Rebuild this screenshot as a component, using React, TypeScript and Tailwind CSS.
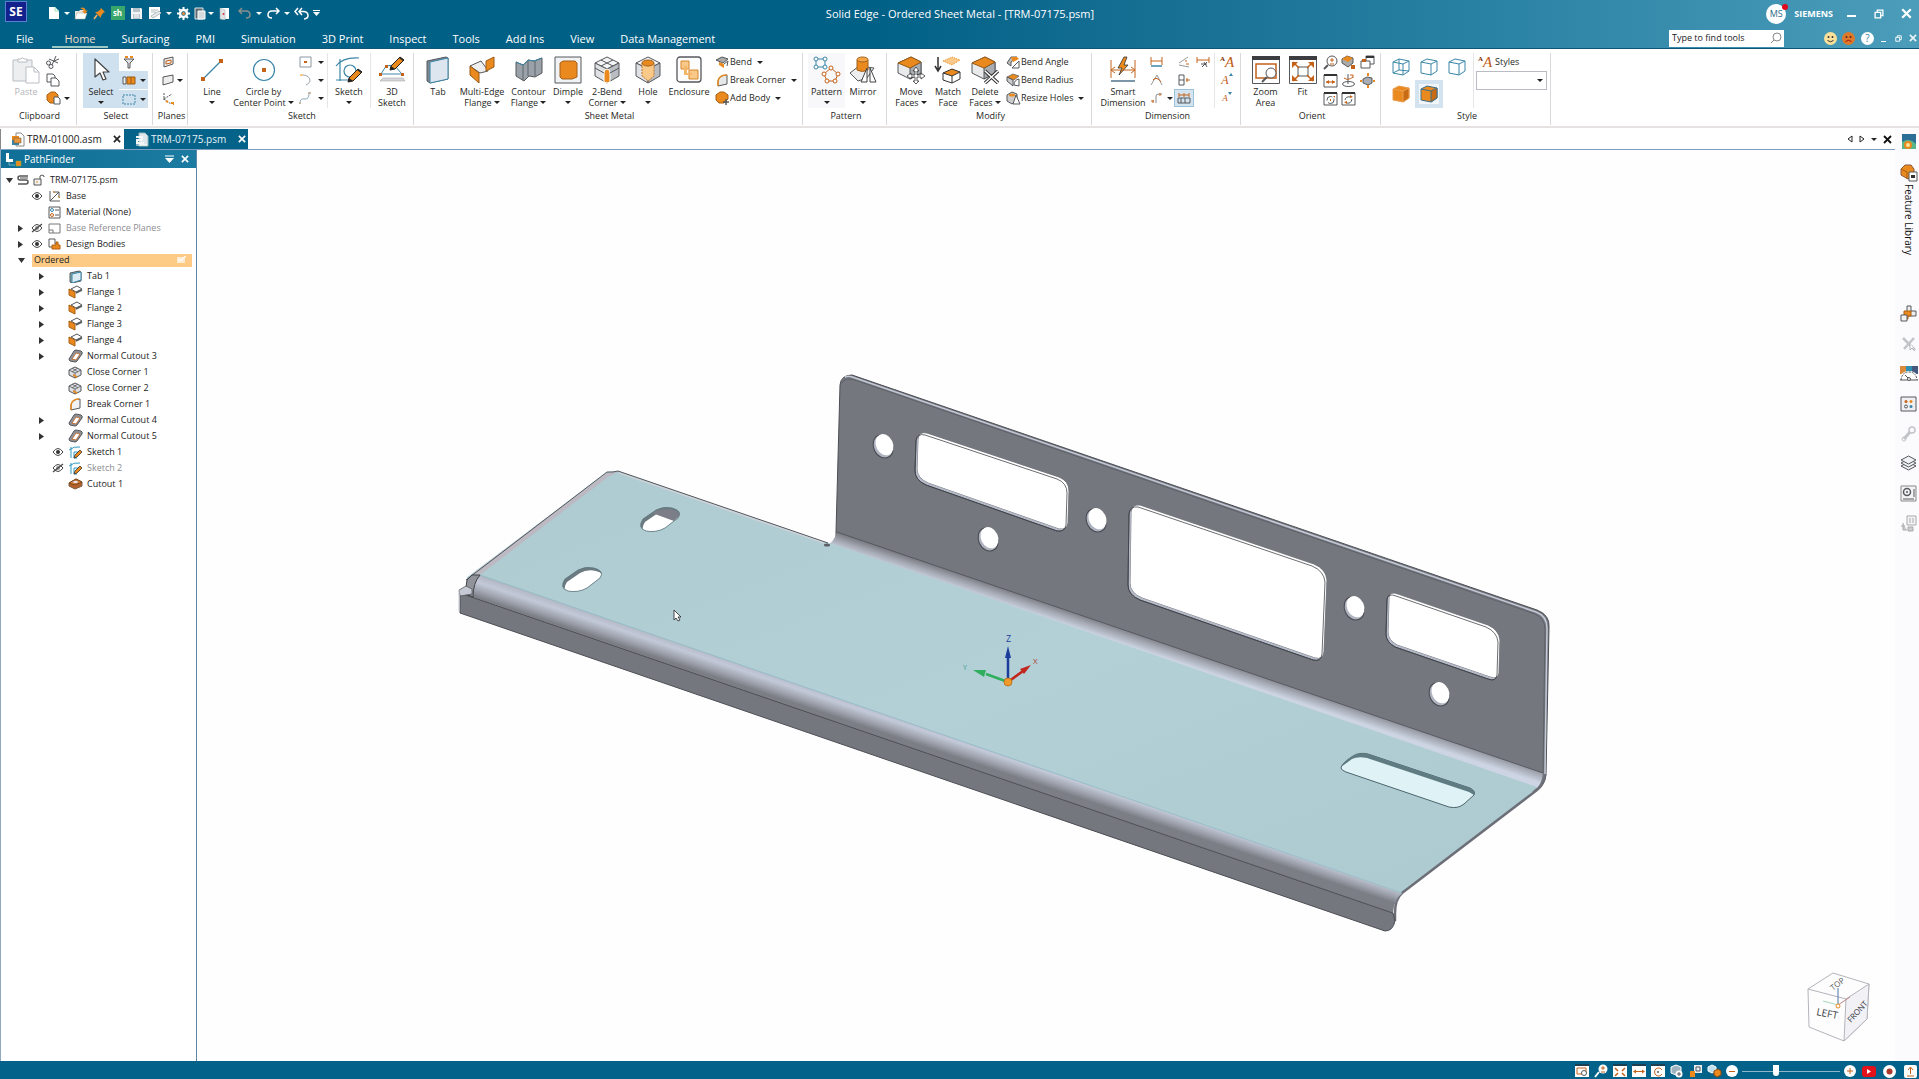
import React from "react";

type Kids = { children?: React.ReactNode };

const O = "#ea8a1e";
const OL = "#f9c98a";
const RU = "#c4621a";
const G = "#55585c";
const LG = "#d5d8dc";
const B = "#3a86a8";

function Ic({ w = 16, h = 16, vb, children }: { w?: number; h?: number; vb?: string } & Kids) {
  return (
    <svg aria-hidden="true" width={w} height={h} viewBox={vb ?? `0 0 ${w} ${h}`} fill="none" className="block shrink-0">
      {children}
    </svg>
  );
}

function Caret({ light }: { light?: boolean }) {
  return (
    <svg aria-hidden="true" width="6" height="3" viewBox="0 0 6 3" className="inline-block shrink-0">
      <path d="M0 0h6L3 3z" fill={light ? "#fff" : "#222"} />
    </svg>
  );
}

function Group({ label, className, children }: { label: string; className: string } & Kids) {
  return (
    <section aria-label={label} className={`flex shrink-0 flex-col pt-1 ${className}`}>
      <div className="flex h-[55px]">{children}</div>
      <h2 className="pl-[3px] text-center leading-[16px]">{label}</h2>
    </section>
  );
}

function Rule() {
  return <div className="my-1 h-[72px] w-px shrink-0 bg-[#d9d9dc]" />;
}

function Sep() {
  return <div className="h-full w-px shrink-0 bg-[#e6e6e8]" />;
}

function Big({ icon, lines, caret, w, dim, className = "" }: { icon: React.ReactNode; lines: string[]; caret?: boolean; w: string; dim?: boolean; className?: string }) {
  return (
    <button className={`flex h-full shrink-0 flex-col items-center pt-[2px] ${w} ${dim ? "text-[#b4b4b8]" : ""} ${className}`}>
      <span className="flex h-[29px] items-center justify-center">{icon}</span>
      <span className="flex flex-col items-center pt-[2px] leading-[11px]">
        {lines.map((l, i) => (
          <span key={l} className="flex items-center gap-[2px] whitespace-nowrap">
            {l}
            {caret && i === 1 && <Caret />}
          </span>
        ))}
        {caret && lines.length === 1 && (
          <span className="flex h-[10px] items-center">
            <Caret />
          </span>
        )}
      </span>
    </button>
  );
}

function Small({ icon, label, text, caret, w = "w-4", className = "" }: { icon: React.ReactNode; label: string; text?: boolean; caret?: boolean; w?: string; className?: string }) {
  return (
    <button aria-label={label} className={`flex h-[18px] items-center whitespace-nowrap ${className}`}>
      <span className={`flex shrink-0 justify-center ${w}`}>{icon}</span>
      {text && <span>{label}</span>}
      {caret && (
        <span className={`flex shrink-0 justify-center ${text ? "w-4" : "w-2"}`}>
          <Caret />
        </span>
      )}
    </button>
  );
}

/* ---------- shared drawings ---------- */

function CubeIc({ top = "#f4f5f6", left = "#dfe1e4", right = "#b9bcc1", s = 28, stroke = G, children }: { top?: string; left?: string; right?: string; s?: number; stroke?: string } & Kids) {
  return (
    <Ic w={s} h={s} vb="0 0 28 28">
      <path d="M14 1 26 7 14 13 2 7z" fill={top} stroke={stroke} strokeLinejoin="round" />
      <path d="M2 7v13l12 7V13z" fill={left} stroke={stroke} strokeLinejoin="round" />
      <path d="M26 7v13l-12 7V13z" fill={right} stroke={stroke} strokeLinejoin="round" />
      {children}
    </Ic>
  );
}

function Block({ children }: Kids) {
  return (
    <Ic w={28} h={28}>
      <path d="M1 7 14 1l10 5v11l-11 6-12-6z" fill="#e9eaec" stroke={G} strokeLinejoin="round" />
      <path d="M13 12 24 6v11l-11 6z" fill="#a9acb1" stroke={G} strokeLinejoin="round" />
      <path d="M1 7 14 1l10 5-11 6z" fill={O} stroke="#9a5a12" strokeLinejoin="round" />
      {children}
    </Ic>
  );
}

function Pencil({ x, y }: { x: number; y: number }) {
  return (
    <g transform={`translate(${x} ${y})`}>
      <path d="M1 14l1-4L11 1l4 3-9 9z" fill={O} stroke="#222" strokeLinejoin="round" />
      <path d="M1 14l1-4 4 3zM10 2l4 3 1-1-4-3z" fill="#222" />
    </g>
  );
}

function WireCube({ fill = "none", inner, stroke = B }: { fill?: string; inner?: boolean; stroke?: string }) {
  return (
    <Ic w={18} h={18}>
      <path d="M1 4 7 1l10 2v10l-6 4L1 15z" fill={fill} stroke={stroke} strokeLinejoin="round" />
      <path d="M1 4l10 2 6-3M11 6v11" stroke={stroke} />
      {inner && <path d="M7 1v11L1 15M7 12l10 1" stroke={stroke} />}
    </Ic>
  );
}

function SolidCube({ edge }: { edge: string }) {
  return (
    <Ic w={18} h={18}>
      <path d="M1 4 7 1l10 2v10l-6 4L1 15z" fill={O} stroke={edge} strokeLinejoin="round" />
      <path d="M11 6l6-3v10l-6 4z" fill="#c96a14" stroke={edge} strokeLinejoin="round" />
      <path d="M1 4l10 2" stroke={edge} />
    </Ic>
  );
}

function Win({ children }: Kids) {
  return (
    <Ic w={15} h={15}>
      <path d="M1 2h13v12H1z" fill="#fff" stroke={G} />
      <path d="M1 1h13v2H1z" fill="#333" />
      {children}
    </Ic>
  );
}

function BigWin({ children }: Kids) {
  return (
    <Ic w={28} h={28}>
      <path d="M.5.500h27v27H.5z" fill="#fff" stroke={G} />
      <path d="M0 0h28v4H0z" fill="#3b3d41" />
      {children}
    </Ic>
  );
}

function Letter({ size }: { size: "lg" | "md" | "sm" }) {
  const c = size === "lg" ? "text-[15px]" : size === "md" ? "text-[12px]" : "text-[9px]";
  return (
    <span className={`flex items-start font-['Liberation_Serif',serif] leading-[14px] text-[#c05a14] ${c}`}>
      {size === "lg" && <span className="text-[7px] font-bold leading-[8px] text-[#7a2c08]">A</span>}
      <i>A</i>
      {size !== "lg" && (
        <svg width="4" height="5" viewBox="0 0 4 5" aria-hidden="true">
          <path d={size === "md" ? "M0 3l2-3 2 3z" : "M0 1h4L2 4z"} fill={B} />
        </svg>
      )}
    </span>
  );
}

/* ---------- title bar ---------- */

function QuickAccess() {
  const items: [string, string, React.ReactNode][] = [
    ["New", "w-[18px]", <Ic w={12} h={14}><path d="M1 1h6l4 4v8H1z" fill="#fff" /><path d="M7 1v4h4" stroke="#9db" /></Ic>],
    ["New options", "w-2", <Caret light />],
    ["Open", "w-[19px]", <Ic w={14} h={14}><path d="M1 5h4l1-1h5v8H1z" fill="#e8e4dc" /><path d="M3 7h10l-2 6H1z" fill="#fff" stroke="#b9a99a" strokeWidth=".5" /><path d="M6 2q5-2 6 3l2-1-3 4-3-3 2 0Q9 3 6 2z" fill={O} /></Ic>],
    ["Pin", "w-[18px]", <Ic w={13} h={13}><path d="M8 1l4 4-2 1-2 3v2L2 5h2l3-2z" fill={O} /><path d="M4 8l-3 4" stroke="#f5b56b" strokeWidth="1.500" /></Ic>],
    ["Sheet metal", "w-[19px]", <span className="flex h-[14px] w-[14px] items-center justify-center bg-[#39a66b] text-[8px] font-bold leading-none text-white">sh</span>],
    ["Save", "w-[18px]", <Ic w={13} h={13}><path d="M1 1h10l1 1v10H1z" fill="#f2f3f4" /><path d="M3 1h7v4H3zM3 7h7v5H3z" fill="#b7c3ca" /><path d="M4 8h5M4 10h5" stroke="#fff" /></Ic>],
    ["Save as", "w-5", <Ic w={14} h={14}><path d="M1 1h11v12H1z" fill="#fff" /><path d="M3 4h7M3 6h5M3 10l8-5 2 2-8 5z" stroke="#b3bcc2" fill="#e9ecee" /></Ic>],
    ["Save options", "w-2", <Caret light />],
    ["Settings", "w-5", <Ic w={13} h={13}><circle cx="6.5" cy="6.500" r="3.500" stroke="#fff" strokeWidth="2.500" /><path d="M6.500 0v2.500M6.500 10.500V13M0 6.500h2.500M10.500 6.500H13M2 2l1.500 1.500M9.500 9.500 11 11M11 2 9.500 3.500M3.500 9.500 2 11" stroke="#fff" strokeWidth="2" /><circle cx="6.500" cy="6.500" r="1.500" fill="#e98a3c" /></Ic>],
    ["Properties", "w-[14px]", <Ic w={12} h={13}><path d="M1 1h8v11H1z" fill="#5d6a72" stroke="#dfe5e8" /><path d="M4 4h7v8H4z" fill="#d5dadd" stroke="#fff" /></Ic>],
    ["Properties options", "w-[7px]", <Caret light />],
    ["Close document", "w-5", <Ic w={11} h={13}><path d="M1 1h9v11H1z" fill="#fff" /><path d="M1 1l5 2v10l-5-1z" fill="#dfe3e6" stroke="#9aa" strokeWidth=".5" /><circle cx="4.500" cy="7" r="1" fill="#d33" /></Ic>],
    ["Undo", "w-[21px]", <Ic w={13} h={12}><path d="M4 1 1 4l3 3M1 4h7q4 0 4 4 0 3-4 3" stroke="#8a8f8c" strokeWidth="1.500" /></Ic>],
    ["Undo options", "w-2", <Caret light />],
    ["Redo", "w-5", <Ic w={13} h={12}><path d="M9 1l3 3-3 3M12 4H5Q1 4 1 8q0 3 4 3" stroke="#fff" strokeWidth="1.500" /></Ic>],
    ["Redo options", "w-[7px]", <Caret light />],
    ["Repeat", "w-[22px]", <Ic w={15} h={13}><path d="M4 1 1 4.500 4 8M8 1 5 4.500 8 8M5 4.500h4q5 0 5 4 0 3-4 3.500" stroke="#fff" strokeWidth="1.500" /></Ic>],
    ["Customize toolbar", "w-2", <Ic w={7} h={6}><path d="M0 .5h7" stroke="#fff" /><path d="M0 2h7L3.500 6z" fill="#fff" /></Ic>],
  ];
  return (
    <div className="flex h-[26px] items-center pl-[22px]">
      {items.map(([name, w, icon]) => (
        <button key={name} aria-label={name} className={`flex h-5 items-center justify-center ${w}`}>
          {icon}
        </button>
      ))}
    </div>
  );
}

function Restore({ s }: { s: number }) {
  return (
    <Ic w={s} h={s} vb="0 0 9 9">
      <path d="M3 3V1h5v5H6M1 3h5v5H1z" stroke="#fff" strokeWidth="1.200" />
    </Ic>
  );
}

function Cross({ s, c }: { s: number; c: string }) {
  return (
    <Ic w={s} h={s} vb="0 0 9 9">
      <path d="M1 1l7 7M8 1 1 8" stroke={c} strokeWidth="1.800" />
    </Ic>
  );
}

function Header() {
  const tabs = ["Home", "Surfacing", "PMI", "Simulation", "3D Print", "Inspect", "Tools", "Add Ins", "View", "Data Management"];
  return (
    <header className="relative h-[49px] border-b border-[#0d5676] bg-linear-to-r from-[#006086] from-45% via-[#2881a3] via-77% to-[#4b9dba] text-white">
      <div className="flex h-[29px] items-start">
        <div className="mt-px ml-[5px] flex h-[21px] w-[22px] items-center justify-center border border-[#5a7fd0] bg-[#12218c] text-[12px] font-bold leading-none">SE</div>
        <div className="-ml-1">
          <QuickAccess />
        </div>
        <div className="ml-auto flex h-[27px] items-center">
          <button aria-label="Account" className="relative flex h-5 w-5 items-center justify-center rounded-full bg-white text-[9px] text-[#2c6b88]">
            MS
            <span className="absolute top-0 -right-[2px] h-[6px] w-[6px] rounded-full bg-[#e00b1c]" />
          </button>
          <b className="ml-2 text-[9px]">SIEMENS</b>
          <button aria-label="Minimize" className="ml-[14px] flex h-5 w-[11px] items-center pt-1">
            <span className="h-[2px] w-[9px] bg-white" />
          </button>
          <button aria-label="Restore" className="ml-4">
            <Restore s={10} />
          </button>
          <button aria-label="Close" className="mr-[7px] ml-[17px]">
            <Cross s={11} c="#fff" />
          </button>
        </div>
      </div>
      <h1 className="pointer-events-none absolute inset-x-0 top-[6px] pl-px text-center text-[11px] leading-[16px]">Solid Edge - Ordered Sheet Metal - [TRM-07175.psm]</h1>
      <div className="flex h-[19px] items-start">
        <nav className="flex h-[19px] gap-[2px] text-[11px] leading-[20px]">
          <button className="mr-[5px] pr-3 pl-4">File</button>
          {tabs.map((t) => (
            <button key={t} className={`h-[19px] px-3 ${t === "Home" ? "border-b-2 border-[#9cc9c4] text-[#f1dcc8]" : ""}`}>
              {t}
            </button>
          ))}
        </nav>
        <div className="ml-auto flex h-[18px] items-center">
          <label className="flex h-[17px] w-[115px] items-center bg-white pr-[2px] text-[#222]">
            <input aria-label="Type to find tools" placeholder="Type to find tools" className="min-w-0 flex-1 bg-transparent pl-[3px] text-[9px] text-black outline-none placeholder:text-[#222]" />
            <Ic w={12} h={12}>
              <circle cx="7" cy="5" r="4" stroke="#888" />
              <path d="M4 8 1 11" stroke="#888" />
            </Ic>
          </label>
          <button aria-label="Like" className="ml-10">
            <Ic w={13} h={13}><circle cx="6.500" cy="6.500" r="6.500" fill="#fbe19a" /><circle cx="4.500" cy="5" r="1" fill="#333" /><circle cx="8.500" cy="5" r="1" fill="#333" /><path d="M3.500 8.500q3 2.500 6 0" stroke="#333" /></Ic>
          </button>
          <button aria-label="Dislike" className="ml-[5px]">
            <Ic w={13} h={13}><circle cx="6.500" cy="6.500" r="6.500" fill="#dd7a2a" /><circle cx="4.500" cy="5" r="1" fill="#522" /><circle cx="8.500" cy="5" r="1" fill="#522" /><path d="M3.500 9.500q3-2.500 6 0" stroke="#a11" /></Ic>
          </button>
          <button aria-label="Help" className="ml-[6px] flex h-[13px] w-[13px] items-center justify-center rounded-full bg-white text-[10px] leading-none text-[#2f86a8]">?</button>
          <button aria-label="Minimize document" className="ml-[7px] flex h-[14px] items-end pb-[3px]">
            <span className="h-px w-[5px] bg-white" />
          </button>
          <button aria-label="Restore document" className="ml-[9px]">
            <Restore s={7} />
          </button>
          <button aria-label="Close document" className="mr-[2px] ml-[7px]">
            <Cross s={8} c="#e8f4f8" />
          </button>
        </div>
      </div>
    </header>
  );
}

/* ---------- ribbon ---------- */

function Ribbon() {
  const tealStroke = { stroke: B, strokeWidth: 1.2 };
  return (
    <div className="flex h-[79px] shrink-0 overflow-hidden border-b-2 border-[#e6e2e2] bg-white text-[9px] text-[#1f1f24]">
      <Group label="Clipboard" className="w-[76px]">
        <Big w="ml-[7px] w-[38px]" dim lines={["Paste"]} icon={
          <Ic w={28} h={28}>
            <path d="M1 4h19v21H1z" fill="#eceef0" stroke="#b9bdc2" /><path d="M6 6V3h3q1-3 3 0h3v3z" fill="#fff" stroke="#b9bdc2" />
            <path d="M14 11h8l5 5v11H14z" fill="#fff" stroke="#b9bdc2" /><path d="M22 11v5h5" stroke="#b9bdc2" />
          </Ic>} />
        <div>
          <Small label="Cut" icon={<Ic w={14} h={14}><path d="M3 4l9 4M10 1 6 10" stroke={G} /><circle cx="2.500" cy="8" r="2" stroke={G} /><circle cx="5" cy="11.500" r="2" stroke={G} /><path d="M8 6l5-2" stroke={G} /></Ic>} />
          <Small label="Copy" icon={<Ic w={14} h={14}><path d="M1 1h6l2 2v6H1z" fill="#fff" stroke={G} /><path d="M5 5h5l3 3v5H5z" fill="#fff" stroke={G} /></Ic>} />
          <Small label="Paste special" caret className="gap-[2px]" icon={<Ic w={15} h={14}><path d="M1 4 5 1h4l3 3v4l-4 4H4L1 9z" fill={O} stroke="#a85e10" /><path d="M8 6h4l2 2v5H8z" fill="#fff" stroke={G} /></Ic>} />
        </div>
      </Group>
      <Rule />
      <Group label="Select" className="w-[75px]">
        <Big w="ml-[6px] w-9" className="bg-[#cfe1ee]" lines={["Select"]} caret icon={
          <Ic w={18} h={24}><path d="M3 1v18l5-4 3 7 3-1-3-7h6z" fill="#fff" stroke="#444" strokeWidth="1.200" strokeLinejoin="round" /></Ic>} />
        <div className="w-[29px]">
          <Small label="Filter" w="w-5" icon={<Ic w={12} h={14}><path d="M1 4h10L7 8v5H5V8z" fill="#e3e3e3" stroke={G} /><path d="M2 2h3M7 2h3" stroke={O} strokeWidth="2" /></Ic>} />
          <Small label="Select mode" w="w-5" caret className="w-full bg-[#cfe1ee]" icon={<Ic w={15} h={11}><path d="M1 2h3v7H1z" stroke={G} fill="#eee" /><path d="M5 2h8v7H5z" fill={O} stroke="#9a5a12" /><path d="M9 2v7" stroke="#9a5a12" /></Ic>} />
          <Small label="Select box" w="w-5" caret className="mt-px w-full bg-[#cfe1ee]" icon={<Ic w={14} h={11}><path d="M1 1h12v9H1z" stroke={B} strokeDasharray="2 1" /></Ic>} />
        </div>
      </Group>
      <Rule />
      <Group label="Planes" className="w-[34px]">
        <div className="ml-[7px]">
          <Small label="Coincident plane" icon={<Ic w={11} h={12}><path d="M1 3l9-2v7l-9 3z" fill="#eee" stroke={G} /><path d="M3 5l5-1v3L3 8z" stroke={RU} /></Ic>} />
          <Small label="Plane types" caret className="-mr-2" icon={<Ic w={12} h={12}><path d="M1 3l10-2v7L1 11z" fill="#eee" stroke={G} /></Ic>} />
          <Small label="Coordinate system" icon={<Ic w={12} h={13}><path d="M2 1v6l8-5M2 7l7 5M2 7H1" stroke={G} strokeDasharray="2 1" /><path d="M9 11h3v2M4 9l2 1" stroke={O} strokeWidth="2" /></Ic>} />
        </div>
      </Group>
      <Rule />
      <Group label="Sketch" className="w-[225px]">
        <Big w="ml-[3px] w-[42px]" lines={["Line"]} caret icon={<Ic w={24} h={24}><path d="M3 21 21 3" {...tealStroke} /><path d="M1 19h4v4H1zM19 1h4v4h-4z" fill={RU} /></Ic>} />
        <Big w="w-[61px]" lines={["Circle by", "Center Point"]} caret icon={<Ic w={24} h={24}><circle cx="12" cy="12" r="10.500" {...tealStroke} /><path d="M10 10h4v4h-4z" fill={RU} /></Ic>} />
        <div className="ml-px">
          <Small label="Rectangle" w="w-5" caret className="gap-[2px]" icon={<Ic w={13} h={12}><path d="M1 1h11v10H1z" stroke="#8a97a0" /><path d="M5 5h3v2H5z" fill={RU} /></Ic>} />
          <Small label="Arc" w="w-5" caret className="gap-[2px]" icon={<Ic w={12} h={12}><path d="M3 1q8 0 8 6-1 3-4 4" stroke="#9aa3ab" /><path d="M1 0h3v2H1z" fill={OL} /></Ic>} />
          <Small label="Curve" w="w-5" caret className="gap-[2px]" icon={<Ic w={13} h={12}><path d="M1 11q0-5 5-4 4 0 4-5" stroke="#86a9bc" /><path d="M9 0h3v2H9zM0 10h2v2H0z" fill="#c9b8a6" /></Ic>} />
        </div>
        <div className="w-[3px]" />
        <Sep />
        <Big w="w-[42px]" lines={["Sketch"]} caret icon={<Ic w={28} h={28}><path d="M5 3v22M1 10Q8 1 24 2M1 24h16" {...tealStroke} /><circle cx="15" cy="15" r="6" {...tealStroke} /><Pencil x={12} y={12} /></Ic>} />
        <Sep />
        <Big w="w-[42px]" lines={["3D", "Sketch"]} icon={<Ic w={28} h={28}><path d="M3 18 8 10l8-1 8 9z" stroke={B} /><path d="M1 17h3v3H1zM23 17h3v3h-3zM7 9h3v3H7z" fill={RU} /><path d="M5 22h20l2 3H2z" fill={LG} stroke="#999" strokeWidth=".5" /><Pencil x={11} y={0} /></Ic>} />
      </Group>
      <Rule />
      <Group label="Sheet Metal" className="w-[388px]">
        <Big w="ml-[5px] w-[38px]" lines={["Tab"]} icon={<Ic w={24} h={28}><path d="M1 5 20 1l2 1v21L4 27l-3-2z" fill="#7f8890" stroke={G} /><path d="M4 6 22 2v21L4 27z" fill="#dde6ee" stroke={B} /></Ic>} />
        <Big w="w-[50px]" lines={["Multi-Edge", "Flange"]} caret icon={<Ic w={28} h={28}><path d="M2 10 13 5l6 8 1 2-8 2z" fill="#eee" stroke={G} /><path d="M2 10l9 7v10l-9-8zM18 5l8-4v10l-8 4z" fill={O} stroke="#9a5a12" strokeLinejoin="round" /></Ic>} />
        <Big w="w-[43px]" lines={["Contour", "Flange"]} caret icon={<Ic w={28} h={26}><path d="M1 5l7 3q3-2 5-5l6 1 8-3v15l-7 4-6-1-5 5-8-5z" fill="#9aa1a8" stroke={G} strokeLinejoin="round" /><path d="M8 8v15M13 3v16M20 4v15" stroke="#5f676f" /><path d="M1 5l7 3q3-2 5-5l6 1 8-3" stroke={B} /></Ic>} />
        <Big w="w-9" lines={["Dimple"]} caret icon={<Ic w={28} h={28}><path d="M1 1h26v26H1z" fill="#f1f2f3" stroke={G} /><path d="M9 5h12l2 2v14l-5 2H8l-2-2V7z" fill={O} stroke="#a3601a" /></Ic>} />
        <Big w="w-[42px]" lines={["2-Bend", "Corner"]} caret icon={<CubeIc><path d="M8 4l12 6M20 4 8 10" stroke={G} /><path d="M11 26v-9q0-4 3-4t3 4v9l-3 1z" fill={O} stroke="#fff" /><path d="M2 12l9 5M26 12l-9 5" stroke={G} /></CubeIc>} />
        <Big w="w-10" lines={["Hole"]} caret icon={<CubeIc><path d="M8 7v13l6 5 6-5V7z" fill={OL} stroke="#c07830" strokeDasharray="2 1" /><ellipse cx="14" cy="7" rx="6" ry="3" fill={O} stroke="#a3601a" /></CubeIc>} />
        <Big w="w-[42px]" lines={["Enclosure"]} icon={<Ic w={26} h={27}><rect x="1" y="1" width="24" height="25" rx="3" fill="#fdfdfe" stroke={G} strokeWidth="1.300" /><path d="M5 5h8v8H5zM13 14h9v9h-9z" fill={OL} stroke="#d8862a" /><path d="M8 10h3v7h5v2H8z" fill="#f4b76a" /></Ic>} />
        <div className="ml-1">
          <Small label="Bend" text caret icon={<Ic w={14} h={14}><path d="M1 5l6-3 6 2-5 4z" fill="#aaa" stroke={G} /><path d="M4 7l5 2v4L4 10z" fill={O} /><path d="M9 9l4-3-1 5" stroke={G} /></Ic>} />
          <Small label="Break Corner" text caret icon={<Ic w={14} h={14}><path d="M3 13V8q1-6 9-6v9z" fill="#e6e8ea" stroke={G} /><path d="M3 13V8q1-6 9-6" stroke={O} strokeWidth="1.500" /></Ic>} />
          <Small label="Add Body" text caret icon={<Ic w={14} h={14}><path d="M1 4 5 1h4l4 3v4l-4 4H4L1 9z" fill={O} stroke="#a85e10" /><path d="M11 8v6M8 11h6" stroke={G} strokeWidth="1.500" /></Ic>} />
        </div>
      </Group>
      <Rule />
      <Group label="Pattern" className="w-[83px]">
        <Big w="ml-[5px] w-[37px]" className="bg-[#f8f8fb]" lines={["Pattern"]} caret icon={
          <Ic w={28} h={28}><path d="M3 3h9v8H3z" stroke={B} /><circle cx="3" cy="3" r="2" fill="#fff" stroke={B} /><circle cx="12" cy="3" r="2" fill="#fff" stroke={B} /><circle cx="3" cy="11" r="2" fill="#fff" stroke={B} /><circle cx="12" cy="11" r="2" fill="#fff" stroke={B} />
            <path d="M18 12l7 6-3 7h-8l-3-7z" stroke={RU} />{[[18, 12], [25, 18], [22, 25], [14, 25], [11, 18]].map(([x, y]) => <circle key={x} cx={x} cy={y} r="2" fill="#fff" stroke={RU} />)}</Ic>} />
        <Big w="w-9" lines={["Mirror"]} caret icon={<Ic w={28} h={28}><path d="M1 17l9-7 15 2-7 10-9 3z" fill="#eceef0" stroke={G} /><path d="M8 4v10q5 3 11 0V4z" fill={O} stroke="#a3601a" /><ellipse cx="13.500" cy="3.500" rx="5.500" ry="2.500" fill="#f3a548" stroke="#a3601a" /><path d="M18 12v14h-6zM21 12v14h6z" fill="#fff" stroke="#444" /></Ic>} />
      </Group>
      <Rule />
      <Group label="Modify" className="w-[204px]">
        <Big w="ml-[5px] w-[38px]" lines={["Move", "Faces"]} caret icon={<Block><path d="M19 11l3 4h-2v4h4v-2l4 3-4 3v-2h-4v4h2l-3 3-3-3h2v-4h-4v2l-4-3 4-3v2h4v-4h-2z" fill="#fff" stroke="#333" strokeWidth=".8" /></Block>} />
        <Big w="w-9" lines={["Match", "Face"]} icon={<Ic w={28} h={28}><path d="M4 1v12M1 10l3 5 3-5" stroke="#333" strokeWidth="1.500" /><path d="M9 5l9-4 8 3-8 5z" fill={OL} stroke={O} strokeDasharray="1 1" /><path d="M9 17v7l9 3 8-4v-7" stroke="#333" /><path d="M9 17l9-4 8 3-8 4zM18 20v7" fill={O} stroke="#333" /></Ic>} />
        <Big w="w-[38px]" lines={["Delete", "Faces"]} caret icon={<Block><path d="M14 15l13 12M27 15 14 27" stroke="#333" strokeWidth="3.500" /><path d="M14 15l13 12M27 15 14 27" stroke="#fff" strokeWidth="1.500" /></Block>} />
        <div className="ml-px">
          <Small label="Bend Angle" text icon={<Ic w={15} h={14}><path d="M1 8 5 2l6 0-6 5v4z" fill="#bbb" stroke={G} /><path d="M5 2h6l2 2-6 3z" fill={O} /><path d="M6 13 13 6v7z" fill="#fff" stroke={G} /></Ic>} />
          <Small label="Bend Radius" text icon={<Ic w={15} h={14}><path d="M1 4l6-3 6 2-5 4z" fill={O} stroke={G} strokeWidth=".7" /><path d="M1 4v4l6 5V7z" fill="#ccc" stroke={G} /><path d="M8 12q0-5 5-6v7z" fill="#fff" stroke={G} /></Ic>} />
          <Small label="Resize Holes" text caret icon={<Ic w={15} h={14}><path d="M1 4l5-3 5 2v6l-5 4-5-3z" fill="#ccc" stroke={G} /><ellipse cx="6" cy="4" rx="3" ry="1.500" fill={O} /><path d="M10 4l4 9H7z" fill="#fff" stroke={G} /></Ic>} />
        </div>
      </Group>
      <Rule />
      <Group label="Dimension" className="w-[148px]">
        <Big w="ml-[6px] w-[50px]" lines={["Smart", "Dimension"]} icon={<Ic w={28} h={28}><path d="M2 4v18M26 4v18M2 14h24M6 11l-4 3 4 3M22 11l4 3-4 3" stroke={RU} /><path d="M2 25h24" stroke="#7b97a8" strokeWidth="2" /><path d="M15 1 9 12h4l-3 7 9-10h-4l3-8z" fill={O} stroke="#333" strokeWidth=".8" /></Ic>} />
        <div className="-ml-px">
          <Small label="Distance between" w="w-[18px]" icon={<Ic w={13} h={12}><path d="M1 1v8M12 1v8M1 5h11" stroke={RU} /><path d="M1 10h11" stroke={B} strokeWidth="1.500" /></Ic>} />
          <Small label="Angle between" w="w-[18px]" icon={<Ic w={13} h={12}><path d="M1 11 7 1l5 10" stroke="#999" /><path d="M3 6q4-4 8 2" stroke={RU} /></Ic>} />
          <Small label="Coordinate dimension" w="w-[18px]" caret className="gap-px" icon={<Ic w={13} h={12}><path d="M6 11V4q0-2 3-2h3" stroke="#888" /><path d="M1 9h3M3 8v3M10 1v3" stroke={RU} /></Ic>} />
        </div>
        <div>
          <Small label="Symmetric diameter" w="w-5" icon={<Ic w={12} h={12}><path d="M1 7l9-6M1 9l10 2" stroke="#999" /><path d="M8 4v2M8 8h3" stroke={RU} /></Ic>} />
          <Small label="Chamfer dimension" w="w-5" icon={<Ic w={13} h={12}><path d="M1 1h5v10H1zM1 6h5" stroke={G} /><path d="M8 6h4M9 4v4" stroke={RU} /></Ic>} />
          <Small label="Dimension alignment" w="w-[18px]" className="border border-[#9cc1da] bg-[#d3e4f0]" icon={<Ic w={14} h={12}><path d="M1 6h12v5H1zM4 6v5M8 6v5" stroke={G} /><path d="M2 3h10M2 1v4M7 1v4M12 1v4" stroke={RU} /></Ic>} />
        </div>
        <div>
          <Small label="Attach dimension" w="w-[18px]" icon={<Ic w={14} h={12}><path d="M1 1v6M13 1v6M1 4h12" stroke={RU} /><path d="M5 8h6M8 6l3 5M11 6l-5 5" stroke={G} /></Ic>} />
        </div>
        <div className="w-[2px]" />
        <Sep />
        <div className="ml-[3px]">
          <Small label="Text style" w="w-[18px]" icon={<Letter size="lg" />} />
          <Small label="Increase text" w="w-[18px]" icon={<Letter size="md" />} />
          <Small label="Decrease text" w="w-[18px]" icon={<Letter size="sm" />} />
        </div>
      </Group>
      <Rule />
      <Group label="Orient" className="w-[139px]">
        <Big w="ml-[6px] w-[37px]" lines={["Zoom", "Area"]} icon={<BigWin><path d="M4 8h20v14H4z" stroke={RU} strokeWidth="1.500" /><circle cx="19" cy="17" r="5" fill="#fff" stroke={G} /><path d="M15 21l-5 5" stroke={G} strokeWidth="2" /></BigWin>} />
        <Big w="w-[37px]" lines={["Fit"]} icon={<BigWin><path d="M9 11h10v9H9z" stroke={G} /><path d="M4 6l6 6M24 6l-6 6M4 25l6-6M24 25l-6-6" stroke={RU} strokeWidth="1.500" /><path d="M3 6h6L3 12zM25 6h-6l6 6zM3 25v-6l6 6zM25 25h-6l6-6z" fill={RU} /></BigWin>} />
        <div>
          <Small label="Zoom" w="w-[18px]" icon={<Ic w={15} h={15}><circle cx="9" cy="6" r="5" stroke={G} /><path d="M5 10l-4 4" stroke={G} strokeWidth="2" /><path d="M7 5h4M9 3v4M7 9h4" stroke={RU} /></Ic>} />
          <Small label="Pan" w="w-[18px]" icon={<Win><path d="M3 9h9" stroke={RU} strokeWidth="1.200" /><path d="M3 9l3-2v4zM12 9l-3-2v4z" fill={RU} /></Win>} />
          <Small label="Rotate" w="w-[18px]" icon={<Win><circle cx="7.500" cy="9" r="3.500" stroke={G} strokeDasharray="8 2" /><path d="M7 8h1v2H7zM10 5h2v2z" fill={RU} /></Win>} />
        </div>
        <div>
          <Small label="Common views" w="w-[19px]" icon={<Ic w={15} h={15}><path d="M1 4l5-3 6 2v5l-5 4-6-4z" fill="#aaa" stroke={G} /><path d="M1 4l5-3 6 2-5 4z" fill={O} /><path d="M10 10h4v4h-4z" fill={RU} /></Ic>} />
          <Small label="Spin about" w="w-[19px]" icon={<Ic w={15} h={15}><ellipse cx="7.500" cy="11" rx="6" ry="2.500" stroke={G} /><path d="M7 1v10" stroke={G} /><path d="M3 5q4 3 9-1M9 2h3v3" stroke={RU} /></Ic>} />
          <Small label="Refresh" w="w-[19px]" icon={<Win><path d="M4 9q1-4 5-3M11 8q-1 5-5 4" stroke={G} /><path d="M9 4l3 2-3 1zM6 13l-3-2 3-1z" fill={RU} /></Win>} />
        </div>
        <div>
          <Small label="Named views" w="w-[18px]" icon={<Ic w={15} h={14}><path d="M6 1h8v8H6z" fill="#fff" stroke={G} /><path d="M6 1h8v2H6z" fill="#333" /><path d="M1 6h9v7H1z" fill="#fff" stroke={G} /><path d="M2 4h4v3H2z" fill={RU} /></Ic>} />
          <Small label="Look at face" w="w-[18px]" icon={<Ic w={15} h={15}><path d="M3 6l4-2 5 1v5l-4 2-5-2z" fill="#aaadb2" stroke={G} /><path d="M7 0h2v3H7zM7 12h2v3H7zM0 7h2v2H0zM13 7h2v2h-2z" fill={O} /></Ic>} />
        </div>
      </Group>
      <Rule />
      <Group label="Style" className="w-[169px]">
        <div className="ml-[6px] grid grid-cols-[28px_28px_28px] grid-rows-[27px_28px] place-items-center">
          <button aria-label="Wire frame"><WireCube inner /></button>
          <button aria-label="Hidden edges"><WireCube /></button>
          <button aria-label="Visible edges"><WireCube fill="#fbfdfe" /></button>
          <button aria-label="Shaded"><SolidCube edge="#e8a050" /></button>
          <button aria-label="Shaded with edges" className="flex h-7 w-7 items-center justify-center border-4 border-[#d3e4f0] bg-[#f2f6fa]"><SolidCube edge="#3d7088" /></button>
        </div>
        <div className="w-[2px]" />
        <Sep />
        <div className="ml-[2px]">
          <Small label="Styles" text w="w-[18px]" className="gap-px" icon={<Letter size="lg" />} />
          <span className="relative block">
            <select aria-label="Style name" className="block h-[19px] w-[71px] appearance-none border border-[#b9bcc4] bg-white">
              <option></option>
            </select>
            <span className="pointer-events-none absolute top-0 right-1 flex h-[19px] items-center"><Caret /></span>
          </span>
        </div>
      </Group>
      <Rule />
    </div>
  );
}

/* ---------- document tabs ---------- */

function DocTabs() {
  return (
    <div className="flex h-[22px] items-end border-b border-[#7f9fc0] bg-white text-[10px] leading-5">
      <div className="flex h-5 w-[124px] items-center border-l border-[#888] pl-[10px] text-[#222]">
        <Ic w={14} h={15}><path d="M5 1h5l3 3v10H5z" fill="#fff" stroke="#888" /><path d="M1 4h7v4H1z" fill={O} /><path d="M1 8h7v5H1z" fill={B} /><path d="M3 6h7v5H3z" fill="#e9973c" stroke="#7a5a3a" strokeWidth=".6" /></Ic>
        <button className="ml-[2px]">TRM-01000.asm</button>
        <button aria-label="Close TRM-01000.asm" className="mr-[3px] ml-auto"><Cross s={8} c="#222" /></button>
      </div>
      <div className="flex h-5 w-[124px] items-center bg-[#056389] pl-[11px] text-[#e7f2f6]">
        <Ic w={14} h={15}><path d="M4 1h6l3 3v10H4z" fill="#dfe7ec" stroke="#9bb" /><path d="M1 5h6v3H2v3h7" stroke="#f4f7f9" strokeWidth="2" /><path d="M1 13h11" stroke="#fff" /></Ic>
        <button className="ml-[2px]">TRM-07175.psm</button>
        <button aria-label="Close TRM-07175.psm" className="mr-[2px] ml-auto"><Cross s={8} c="#fff" /></button>
      </div>
      <div className="mr-[27px] ml-auto flex h-5 items-center gap-[6px]">
        <button aria-label="Previous tab"><Ic w={6} h={8}><path d="M5 1v6L1 4z" stroke="#222" /></Ic></button>
        <button aria-label="Next tab"><Ic w={6} h={8}><path d="M1 1v6l4-3z" stroke="#222" /></Ic></button>
        <button aria-label="Tab list" className="flex items-center"><Caret /></button>
        <button aria-label="Close tab"><Cross s={9} c="#111" /></button>
      </div>
    </div>
  );
}

/* ---------- tree ---------- */

function Eye({ off }: { off?: boolean }) {
  return (
    <Ic w={12} h={10}>
      <path d="M1 5q5-7 10 0-5 7-10 0z" fill="#fff" stroke="#444" />
      <circle cx="6" cy="5" r="2" fill={off ? "#999" : "#333"} />
      {off && <path d="M1 9 11 1" stroke="#444" strokeWidth="1.200" />}
    </Ic>
  );
}

const treeIcons: Record<string, React.ReactNode> = {
  base: <Ic w={13} h={13}><path d="M2 1v10h10M2 11 11 2M5 2h6v6" stroke={G} /><path d="M5 1l2 2M10 6l2 2" stroke={O} /></Ic>,
  material: <Ic w={13} h={13}><path d="M1 1h11v11H1z" fill="#fff" stroke={G} /><circle cx="4" cy="4" r="1.500" stroke={B} /><circle cx="4" cy="9" r="1.500" stroke={RU} /><path d="M7 4h4M7 9h4" stroke={G} /></Ic>,
  plane: <Ic w={13} h={11}><path d="M1 1h11v9H1zM1 7h4v3" stroke="#777" /></Ic>,
  bodies: <Ic w={13} h={12}><path d="M1 1h6v5h2v3H1z" fill="#fff" stroke={G} /><path d="M4 7h4V4h2v3h2v4H4z" fill={O} stroke="#b06010" /></Ic>,
  tab: <Ic w={13} h={13}><path d="M1 3l9-2 2 1v9l-9 2-2-1z" fill="#8aa" stroke={G} /><path d="M3 4l9-2v8l-9 3z" fill="#dcebf4" stroke={B} /></Ic>,
  flange: <Ic w={15} h={14}><path d="M3 4l6-3 5 3-6 3z" fill="#fff" stroke={G} strokeLinejoin="round" /><path d="M1 4l6 3v6L1 10z" fill={O} stroke="#a85e10" strokeLinejoin="round" /><path d="M8 8l6-3" stroke={G} strokeWidth="1.500" /></Ic>,
  cutout: <Ic w={15} h={14}><path d="M1 10 6 2q1-1 2-1l5 1q2 1 1 3L9 12q-1 1-2 1l-5-1q-1-1-1-2z" fill="#8d9197" stroke={G} /><path d="M4 10l4-6 4 1-4 6z" fill="#fff" stroke={RU} strokeWidth=".8" /></Ic>,
  close: <Ic w={14} h={13}><path d="M7 1l6 3v5l-6 3-6-3V4z" fill="#dcdee1" stroke={G} /><path d="M1 4l6 3 6-3M4 2l6 4M10 2 4 6M7 7v5" stroke={G} strokeWidth=".8" /><path d="M5 8l4 2v2L5 10z" fill={O} /></Ic>,
  break: <Ic w={13} h={13}><path d="M2 12V7q1-6 9-6v9z" fill="#f2f3f4" stroke={G} /><path d="M2 12V7q1-6 8-6" stroke={O} strokeWidth="1.500" /></Ic>,
  sketch: <Ic w={15} h={13}><path d="M3 1v11M1 4q5-4 11-3M6 6h5M6 6v6h3" stroke="#2f9ac0" /><path d="M6 12l1-3 5-5 2 2-5 5z" fill={O} stroke="#333" strokeWidth=".8" /></Ic>,
  solid: <Ic w={15} h={12}><path d="M1 5 8 1l6 3v4l-7 3-6-3z" fill="#b5622a" stroke="#7a5a44" /><path d="M1 5 8 1l6 3-7 3z" fill={O} stroke="#7a4a22" /><ellipse cx="7.500" cy="4" rx="3" ry="1.300" fill="#fff" stroke="#844" strokeWidth=".6" /></Ic>,
};

type Row = { t: string; i: string; lvl: 1 | 2; arrow?: boolean; eye?: "on" | "off"; dim?: boolean };
const topRows: Row[] = [
  { t: "Base", i: "base", lvl: 1, eye: "on" },
  { t: "Material (None)", i: "material", lvl: 1 },
  { t: "Base Reference Planes", i: "plane", lvl: 1, arrow: true, eye: "off", dim: true },
  { t: "Design Bodies", i: "bodies", lvl: 1, arrow: true, eye: "on" },
];
const features: Row[] = [
  { t: "Tab 1", i: "tab", lvl: 2, arrow: true },
  { t: "Flange 1", i: "flange", lvl: 2, arrow: true },
  { t: "Flange 2", i: "flange", lvl: 2, arrow: true },
  { t: "Flange 3", i: "flange", lvl: 2, arrow: true },
  { t: "Flange 4", i: "flange", lvl: 2, arrow: true },
  { t: "Normal Cutout 3", i: "cutout", lvl: 2, arrow: true },
  { t: "Close Corner 1", i: "close", lvl: 2 },
  { t: "Close Corner 2", i: "close", lvl: 2 },
  { t: "Break Corner 1", i: "break", lvl: 2 },
  { t: "Normal Cutout 4", i: "cutout", lvl: 2, arrow: true },
  { t: "Normal Cutout 5", i: "cutout", lvl: 2, arrow: true },
  { t: "Sketch 1", i: "sketch", lvl: 2, eye: "on" },
  { t: "Sketch 2", i: "sketch", lvl: 2, eye: "off", dim: true },
  { t: "Cutout 1", i: "solid", lvl: 2 },
];

function Open() {
  return <Ic w={7} h={5}><path d="M0 0h7L3.500 5z" fill="#333" /></Ic>;
}

function TreeRow({ r }: { r: Row }) {
  return (
    <li className={`flex h-4 items-center ${r.lvl === 1 ? "pl-[13px]" : "pl-[34px]"} ${r.dim ? "text-[#8d8d92]" : ""}`}>
      <span className="flex w-3 justify-center">{r.arrow && <Ic w={5} h={7}><path d="M0 0v7l5-3.500z" fill="#333" /></Ic>}</span>
      <span className="ml-1 flex w-[14px] justify-center">{r.eye && <Eye off={r.eye === "off"} />}</span>
      <span className="ml-[2px] flex w-4 justify-center">{treeIcons[r.i]}</span>
      <button className="ml-1">{r.t}</button>
    </li>
  );
}

function PathFinder() {
  return (
    <aside className="flex w-[197px] shrink-0 flex-col border-x border-r-[#5b86a6] border-l-[#8fa9bf] bg-white text-[9px] text-[#222]">
      <div className="flex h-[18px] items-center bg-linear-to-r from-[#0f6f96] to-[#1b7ba0] pl-[4px] text-white">
        <Ic w={17} h={15}><path d="M1 1h3v6h4v3H1z" fill="#fff" /><path d="M4 10v3h6" stroke="#9cc" strokeWidth=".7" /><path d="M11 9h5v5h-5z" fill={O} stroke="#8a4" strokeWidth=".5" /></Ic>
        <h2 className="ml-[2px] text-[10px]">PathFinder</h2>
        <button aria-label="Panel options" className="ml-auto"><Ic w={9} h={8}><path d="M0 1h9" stroke="#fff" /><path d="M0 3h9L4.500 8z" fill="#fff" /></Ic></button>
        <button aria-label="Close panel" className="mr-[7px] ml-[7px]"><Cross s={8} c="#fff" /></button>
      </div>
      <ul className="pt-1">
        <li className="flex h-4 items-center pl-[5px]">
          <Open />
          <span className="ml-[4px]"><Ic w={12} h={12}><path d="M11 2H3q-2 0-2 2t2 2h6q2 0 2 2t-2 2H1" stroke="#555" strokeWidth="1.500" /><path d="M3 4h8" stroke="#555" /></Ic></span>
          <span className="ml-[4px]"><Ic w={12} h={12}><path d="M1 5h7v6H1z" fill="#f3f3f3" stroke="#555" /><path d="M7 5V2q2-2 4 0v1" stroke="#555" /><path d="M4 7v2" stroke={O} /></Ic></span>
          <button className="ml-[5px]">TRM-07175.psm</button>
        </li>
        {topRows.map((r) => <TreeRow key={r.t} r={r} />)}
        <li className="flex h-4 items-center pl-[17px]">
          <Open />
          <button className="mr-[4px] ml-[7px] flex h-[13px] flex-1 items-center justify-between bg-[#fdcb85] pr-[6px] pl-[2px]">
            Ordered
            <Ic w={10} h={8}><path d="M1 1h8v6H1z" fill="#fdebd0" /><path d="M2 3l2 2 6-5" stroke="#fff" strokeWidth="1.200" /></Ic>
          </button>
        </li>
        {features.map((r) => <TreeRow key={r.t} r={r} />)}
      </ul>
    </aside>
  );
}

/* ---------- model view ---------- */

const slot = "M643 519 656 510Q663 506 672 508 683 511 678 518L665 528Q656 533 646 531 637 528 643 519Z";
const windows = [
  "M916 441Q917 433 925 435L1057 479Q1067 483 1067 493L1066 525Q1065 532 1057 531L926 485Q915 480 915 471Z",
  "M1129 514Q1130 506 1138 507L1312 566Q1324 571 1325 582L1322 654Q1321 662 1313 660L1140 600Q1128 595 1128 585Z",
  "M1387 599Q1388 593 1396 596L1486 627Q1497 632 1498 642L1497 675Q1496 682 1488 679L1395 647Q1386 642 1386 634Z",
];
const holes = [[884, 446], [989, 539], [1097, 520], [1355, 608], [1440, 694]];

function ModelView() {
  return (
    <svg role="img" aria-label="Sheet metal bracket" viewBox="197 150 1698 911" className="block h-full w-full font-['Open_Sans',sans-serif]">
      <defs>
        <linearGradient id="lowBend" gradientUnits="userSpaceOnUse" x1="480" y1="575" x2="473" y2="596">
          <stop offset="0" stopColor="#b0b5c3" /><stop offset=".35" stopColor="#c3c9d8" /><stop offset=".7" stopColor="#a0a4af" /><stop offset="1" stopColor="#7b7e85" />
        </linearGradient>
        <linearGradient id="upBend" gradientUnits="userSpaceOnUse" x1="837" y1="532" x2="832" y2="547">
          <stop offset="0" stopColor="#75777e" /><stop offset=".5" stopColor="#a5a9b4" /><stop offset="1" stopColor="#cdd4e3" />
        </linearGradient>
        <linearGradient id="plate" x1="0" y1="0" x2="1" y2="1">
          <stop offset="0" stopColor="#aecbd2" /><stop offset=".5" stopColor="#b3d0d7" /><stop offset="1" stopColor="#aecad1" />
        </linearGradient>
        <clipPath id="slotClip"><path d={slot} /></clipPath>
      </defs>
      <path d="M836 532 840 385Q841 375 852 375L1537 610Q1550 615 1549 627L1546 775Q1545 785 1537 790L1500 800 836 545Z" fill="#75777e" stroke="#4c4e54" />
      <path d="M845 377Q849 375 855 378L1536 612Q1547 616 1547 628L1545 774" fill="none" stroke="#c3c9d7" strokeWidth="1.500" />
      <path d="M842 383Q845 377 855 380L1535 614Q1545 618 1545 630L1543 773" fill="none" stroke="#55575e" strokeWidth=".7" />
      {windows.map((d, i) => (
        <g key={d}>
          <clipPath id={`win${i}`}><path d={d} /></clipPath>
          <path d={d} fill="#b4bac8" stroke="#45474d" />
          <path d={d} fill="#fff" stroke="#55575e" strokeWidth=".8" transform="translate(2 -2)" clipPath={`url(#win${i})`} />
          <path d={d} fill="none" stroke="#45474d" strokeWidth=".8" />
        </g>
      ))}
      {holes.map(([x, y]) => (
        <g key={x}>
          <ellipse cx={x - 1} cy={y} rx="9.500" ry="12" transform={`rotate(-25 ${x} ${y})`} fill="#aeb3bf" stroke="#45474d" />
          <ellipse cx={x + 1} cy={y - 1} rx="8.500" ry="11" transform={`rotate(-25 ${x} ${y})`} fill="#fff" />
        </g>
      ))}
      <path d="M837 532 1543 773Q1542 783 1537 788L1530 790 826 546Q834 542 837 532Z" fill="url(#upBend)" />
      <path d="M837 532 1543 773" stroke="#4f5157" strokeWidth=".8" />

      <path d="M466 578 607 472 618 471 828 543 833 544 1537 787Q1530 797 1402 893L480 577Z" fill="url(#plate)" />
      <path d="M470 576 607 473 618 472 608 477 480 575Z" fill="#bcb9c2" />
      <path d="M466 580 607 472 613 472 618 471 828 543" fill="none" stroke="#55575d" />
      <path d="M619 473 824 543" stroke="#d5d2d8" strokeWidth="1.200" />
      <ellipse cx="827" cy="545" rx="3" ry="1.500" fill="#5d5f66" />
      <path d="M1545 774Q1544 785 1537 790L1402 893Q1395 899 1395 913L1395 921" fill="none" stroke="#6c6f77" strokeWidth="2.500" />

      <path d="M460 593 1393 913 1395 921Q1393 931 1385 931L460 613Z" fill="#75777e" stroke="#4c4e54" />
      <path d="M480 575 1402 893Q1394 900 1393 913L473 597Q473 583 480 575Z" fill="url(#lowBend)" />
      <path d="M460 593 1393 913" stroke="#4f5157" strokeWidth=".8" />
      <path d="M480 575 1402 893" stroke="#8fb9c4" strokeWidth=".8" />
      <path d="M466 587 467 580 472 575 480 575Q473 583 473 597L459 591Z" fill="#90939a" stroke="#3f4147" />
      <path d="M459 590 466 586 472 589 472 594 460 596Z" fill="#c5c9d3" stroke="#4c4e54" strokeWidth=".7" />
      <path d="M459 590V611" stroke="#c5c9d3" />

      {[0, 1].map((n) => (
        <g key={n} transform={n ? "translate(-78 60)" : undefined}>
          <path d={slot} fill="#6b7a80" />
          <g clipPath="url(#slotClip)">
            <path d={slot} fill="#fff" transform="translate(2 3)" />
            {n === 0 && <path d="M652 513 674 521 684 512 670 509 658 510Z" fill="#7b7e86" />}
          </g>
          <path d={slot} fill="none" stroke="#5c757c" strokeWidth=".8" />
        </g>
      ))}
      <path d="M1341 768Q1341 764 1353 756 1359 752 1368 754L1470 788Q1476 791 1474 795L1464 804Q1458 809 1449 807L1346 772Q1341 770 1341 768Z" fill="#dff3f6" stroke="#4d646b" />
      <path d="M1341 767Q1346 759 1353 756 1359 752 1368 754L1470 788Q1476 791 1474 795L1469 792 1367 758Q1358 756 1352 759Z" fill="#5f7c82" />

      <g strokeWidth="2.500">
        <path d="M1008 682V655" stroke="#1c3c9c" /><path d="M1008 646l-3 12h6z" fill="#1c3c9c" />
        <path d="M1008 682 1023 671" stroke="#c2261c" /><path d="M1031 665l-11 4 4 5z" fill="#c2261c" />
        <path d="M1008 682 986 674" stroke="#2fae5e" /><path d="M973 670l13 0-2 7z" fill="#2fae5e" />
      </g>
      <circle cx="1008" cy="682" r="4" fill="#ee9a2c" stroke="#b56a14" strokeWidth=".8" />
      <text x="1006" y="642" fontSize="9" fill="#1c3c9c">Z</text>
      <text x="1033" y="664" fontSize="8" fill="#b04030">X</text>
      <text x="963" y="670" fontSize="7" fill="#2f9a86">Y</text>
      <path d="M674 610v10l2-2 2 3 2-1-2-3h3z" fill="#fff" stroke="#222" strokeWidth=".8" />
    </svg>
  );
}

function ViewCube() {
  return (
    <button aria-label="View cube" className="absolute right-[24px] bottom-[18px]">
      <svg width="66" height="72" viewBox="0 0 66 72" fill="none" className="block font-['Open_Sans',sans-serif]">
        <path d="M3 18 28 2 64 13 62 48 39 70 4 56Z" fill="#fdfdfe" stroke="#b4b4bc" />
        <path d="M41 28 64 13 62 48 39 70Z" fill="#f1f1f6" stroke="#b4b4bc" />
        <path d="M3 18 41 28" stroke="#b4b4bc" />
        <path d="M33 34V17" stroke="#4a74a8" /><path d="M33 34 18 30" stroke="#a8d8b8" /><path d="M33 34 45 26" stroke="#b88" />
        <circle cx="33" cy="35" r="2" fill="#fff" stroke={O} />
        <text x="11" y="44" fontSize="10" fill="#33363d" transform="rotate(11 11 44)">LEFT</text>
        <text x="46" y="52" fontSize="8" fill="#33363d" transform="rotate(-48 46 52)">FRONT</text>
        <text x="28" y="20" fontSize="8" fill="#555" transform="rotate(-38 28 20)">TOP</text>
      </svg>
    </button>
  );
}

/* ---------- side strip ---------- */

function SideStrip() {
  const items: [string, React.ReactNode][] = [
    ["Parts", <Ic w={17} h={17}><path d="M7 1h4v5h5v5h-5v0H7z" fill="#eee" stroke={G} /><path d="M4 6h7v5H8v3H4z" fill={O} stroke="#a85e10" /><path d="M1 10h6v6H1z" fill="#f3f3f3" stroke={G} /></Ic>],
    ["Tools", <Ic w={16} h={16}><path d="M2 2l12 12M13 2 3 13" stroke="#c2c4c8" strokeWidth="2.500" /><path d="M9 7v7l2-2 3 3" stroke="#b2b4b8" fill="#fff" /></Ic>],
    ["Performance", <Ic w={18} h={16}><path d="M0 0h6v8H0z" fill="#d98a3a" /><path d="M6 0h6v8H6z" fill="#2f8fb0" /><path d="M12 0h6v8h-6z" fill="#44577e" /><path d="M0 15V10Q3 5 9 5t9 5v5z" fill="#fff" /><path d="M1 14Q2 6 9 6t8 8" stroke="#555" strokeDasharray="2 1" /><path d="M9 13 5 9M0 14h18" stroke="#555" /><circle cx="9" cy="13" r="1.500" fill="#fff" stroke="#555" /></Ic>],
    ["Color manager", <Ic w={17} h={16}><path d="M1 1h15v14H1z" fill="#f0f0f2" stroke={G} /><circle cx="6" cy="5.500" r="1.500" fill={RU} /><circle cx="11" cy="5.500" r="1.500" fill={O} /><circle cx="6" cy="10.500" r="1.500" stroke={G} /><circle cx="11" cy="10.500" r="1.500" fill={B} /></Ic>],
    ["Fasteners", <Ic w={15} h={16}><circle cx="11" cy="4" r="3" stroke="#c2c4c8" strokeWidth="1.500" /><path d="M9 6l-6 7" stroke="#c2c4c8" strokeWidth="3" /><circle cx="3" cy="13" r="2" stroke="#c2c4c8" /></Ic>],
    ["Layers", <Ic w={17} h={17}>{[7, 4, 1].map((y) => <path key={y} d={`M1 ${y + 4}l7.500-4 7.500 4-7.500 4z`} fill="#f0f1f3" stroke={G} />)}</Ic>],
    ["Sensors", <Ic w={17} h={17}><path d="M1 1h15v15H1z" fill="#f4f4f6" stroke="#888" /><circle cx="7" cy="7" r="3.500" stroke={G} strokeWidth="1.500" /><circle cx="7" cy="7" r="1" fill={G} /><path d="M3 14h11M14 4v8" stroke={G} /></Ic>],
    ["Simulation", <Ic w={17} h={17}><path d="M7 1h9v9H7zM10 3v5M13 3v5" fill="#f3f3f5" stroke="#aaa" /><path d="M3 8v7h4M8 12h5v4H8zM1 11h4" stroke="#aaa" fill="#ccc" /></Ic>],
  ];
  return (
    <aside className="flex w-[24px] shrink-0 flex-col items-center bg-[#fbfafd] pl-[3px]">
      <button aria-label="Feature library" className="flex flex-col items-center pt-[14px]">
        <Ic w={18} h={18}><path d="M1 5 5 1h6l3 4v7l-6 3-7-4z" fill={O} stroke="#8a5a3a" /><path d="M1 5l6 3v7" stroke="#a85e10" /><path d="M9 8h8v9H9z" fill="#fff" stroke={G} /><path d="M11 11h4v3h-4z" fill="#333" /></Ic>
        <span className="pt-[2px] text-[10px] leading-[12px] text-[#111] [writing-mode:vertical-rl]">Feature Library</span>
      </button>
      <div className="flex flex-col pt-[44px]">
        {items.map(([name, icon]) => (
          <button key={name} aria-label={name} className="flex h-[30px] items-center justify-center">{icon}</button>
        ))}
      </div>
    </aside>
  );
}

/* ---------- status bar ---------- */

function StatusBar() {
  const W = ({ children }: Kids) => (
    <Ic w={14} h={14}><path d="M0 1h14v12H0z" fill="#fff" /><path d="M0 0h14v2H0z" fill="#1d3f4f" />{children}</Ic>
  );
  const items: [string, React.ReactNode][] = [
    ["Zoom area", <W><path d="M2 4h9v6H2z" stroke={RU} /><circle cx="9" cy="9" r="2.500" fill="#fff" stroke={G} /></W>],
    ["Zoom", <Ic w={14} h={14}><circle cx="9" cy="5" r="4.500" fill="#fff" /><path d="M5 8 1 13" stroke="#fff" strokeWidth="2" /><path d="M7 4h4M9 2v4M7 8h4" stroke={RU} /></Ic>],
    ["Fit", <W><path d="M2 4l3 3M12 4 9 7M2 12l3-3M12 12 9 9" stroke={RU} strokeWidth="1.500" /></W>],
    ["Pan", <W><path d="M2 7.500h10" stroke={RU} /><path d="M1 7.500l3-2v4zM13 7.500l-3-2v4z" fill={RU} /></W>],
    ["Rotate", <W><path d="M11 6a4 4 0 1 0 0 4" stroke={RU} /><circle cx="7" cy="8" r="1" fill={G} /></W>],
    ["Spin", <Ic w={13} h={14}><path d="M1 3l5-2 5 2v6l-5 2-5-2z" fill="#9db4bf" stroke="#fff" /><circle cx="9" cy="10" r="3.500" fill="#fff" /><path d="M9 8v4M7 10h4" stroke={G} /></Ic>],
    ["Previous view", <Ic w={14} h={14}><path d="M5 1h8v8H5z" fill="#e8eef1" /><path d="M7 3h4v4H7z" stroke={G} /><path d="M1 7h5v6H1z" fill={O} /></Ic>],
    ["View styles", <Ic w={15} h={14}><path d="M1 3l4-2 4 2v4L5 9 1 7z" fill="#bfe0ec" stroke="#fff" /><path d="M7 7l4-2 3 2v4l-4 2-3-2z" fill={O} stroke="#8a4a10" /></Ic>],
  ];
  return (
    <footer className="flex h-[18px] shrink-0 items-center justify-end bg-[#03628a] pt-[2px]">
      {items.map(([name, icon]) => (
        <button key={name} aria-label={name} className="flex w-[19px] items-center justify-center">{icon}</button>
      ))}
      <button aria-label="Zoom out" className="ml-[2px] flex h-[12px] w-[12px] items-center justify-center rounded-full bg-white"><span className="h-px w-[6px] bg-[#c4621a]" /></button>
      <input type="range" aria-label="Zoom level" defaultValue={34} className="mx-[4px] h-[14px] w-[98px] appearance-none bg-transparent [&::-webkit-slider-runnable-track]:h-px [&::-webkit-slider-runnable-track]:bg-[#8db6c8] [&::-webkit-slider-thumb]:-mt-[6px] [&::-webkit-slider-thumb]:h-[11px] [&::-webkit-slider-thumb]:w-[6px] [&::-webkit-slider-thumb]:appearance-none [&::-webkit-slider-thumb]:rounded-b-sm [&::-webkit-slider-thumb]:bg-white" />
      <button aria-label="Zoom in" className="flex h-[12px] w-[12px] items-center justify-center rounded-full bg-white"><Ic w={8} h={8}><path d="M1 4h6M4 1v6" stroke={RU} /></Ic></button>
      <button aria-label="Video" className="ml-[6px]"><Ic w={14} h={11}><rect width="14" height="11" rx="3" fill="#e3111a" /><path d="M5 3v5l4-2.500z" fill="#fff" /></Ic></button>
      <button aria-label="Record" className="ml-[7px]"><Ic w={13} h={13}><circle cx="6.500" cy="6.500" r="6.500" fill="#fff" /><circle cx="6.500" cy="6.500" r="3" fill="#a8382a" /></Ic></button>
      <button aria-label="Upload" className="mr-[2px] ml-[8px]"><Ic w={13} h={13}><rect width="13" height="13" rx="2" fill="#fff" /><path d="M6.500 9V3M4 5l2.500-3L9 5M3 11h7" stroke={RU} /></Ic></button>
    </footer>
  );
}

export default function App() {
  return (
    <div className="flex h-screen min-w-0 flex-col overflow-hidden bg-white font-['Open_Sans','Noto_Sans',sans-serif]">
      <Header />
      <Ribbon />
      <div className="relative">
        <DocTabs />
        <button aria-label="Simulation library" className="absolute right-0 bottom-0 flex h-[21px] w-[24px] items-center justify-center bg-[#fbfafd] pt-1 pl-[3px]">
          <Ic w={14} h={15}><path d="M0 0h14v15H0z" fill="#2c6f96" /><path d="M0 15V8q7-5 14 2v5z" fill="#59b58a" /><circle cx="6" cy="11" r="4" fill={O} /><circle cx="6" cy="11" r="2" fill="#fbe19a" /></Ic>
        </button>
      </div>
      <div className="flex min-h-0 flex-1">
        <PathFinder />
        <main className="relative min-w-0 flex-1 bg-[#fefefe]">
          <ModelView />
          <ViewCube />
        </main>
        <SideStrip />
      </div>
      <StatusBar />
    </div>
  );
}
